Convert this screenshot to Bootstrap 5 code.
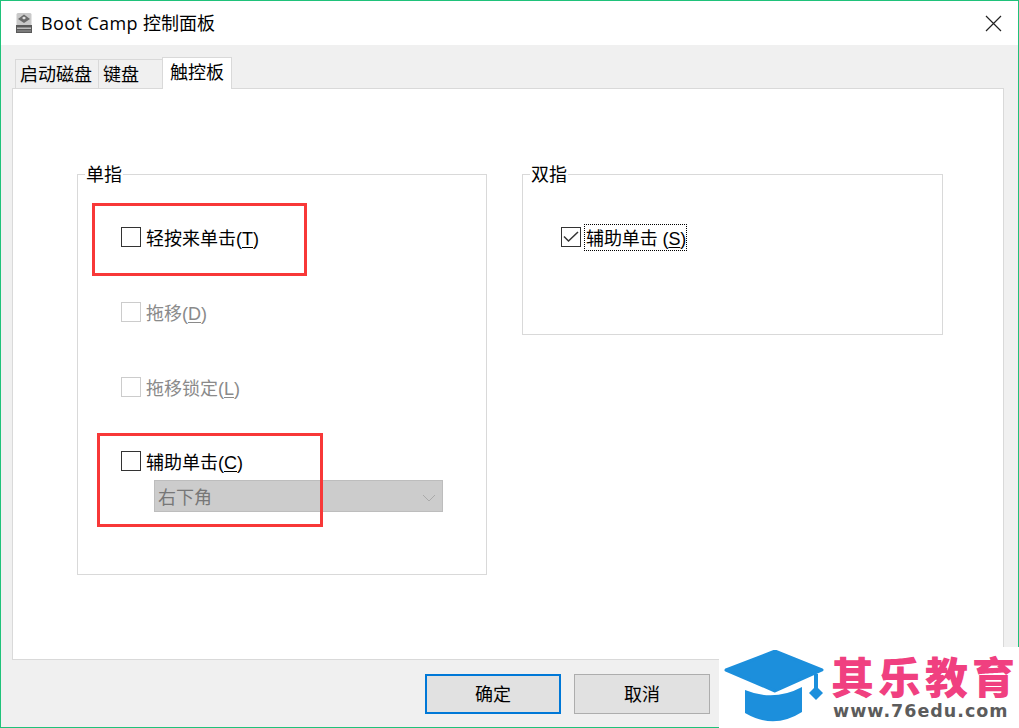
<!DOCTYPE html>
<html lang="zh-CN">
<head>
<meta charset="utf-8">
<title>Boot Camp</title>
<link href="https://cdn.jsdelivr.net/npm/bootstrap@5.3.0/dist/css/bootstrap.min.css" rel="stylesheet">
<style>
html,body{margin:0;height:728px;overflow:hidden;background:#fff}
body{font-family:"Liberation Sans","Noto Sans CJK SC",sans-serif;font-size:18px;color:#000;line-height:1}
.win{width:1019px;height:728px;border:1px solid #1fc27a;background:#f0f0f0;position:relative;display:flex;flex-direction:column}
.tbar{height:44px;background:#fff;padding-left:14px;gap:8px;font-size:18px;flex:none}
.tlat{font-family:"Open Sans",sans-serif;letter-spacing:.4px}
.tclose{margin-left:auto;margin-right:16px;width:17px;height:17px}
.tabrow{height:43px;padding-left:14px;align-items:flex-end;flex:none}
.tb{height:29px;border:1px solid #d9d9d9;border-bottom:0;background:#f0f0f0;padding:6px 0 0 4px;font-size:18px;margin-right:-1px}
.tb1{width:84px}.tb2{width:65px}
.tb3{width:70px;height:32px;background:#fff;padding:6px 0 0 7px;margin-bottom:-1px;position:relative;z-index:2}
.pane{margin:0 14px 0 11px;height:572px;background:#fff;border:1px solid #d9d9d9;padding:85px 0 0 64px;gap:35px;flex:none}
.grp{border:1px solid #d9d9d9;position:relative}
.grp1{width:410px;height:401px;padding:52px 0 0 43px}
.grp2{width:421px;height:161px;padding:52px 0 0 38px}
.cap{position:absolute;top:-9px;left:7px;background:#fff;padding:0 1px;font-size:18px;line-height:18px}
.chk{height:20px;gap:5px;font-size:18px;line-height:20px}
.lbl{padding-top:4px}
.bx{width:20px;height:20px;border:1px solid #333;background:#fff;flex:none;display:block}
.off .bx{border-color:#ccc}
.off{color:#8a8a8a}
.mt1{margin-top:55px}
.mt2{margin-top:54px}
.u{text-decoration:underline;text-underline-offset:2px}
.fcs{outline:1px dotted #000;padding:5px 0 2px 1px;margin-left:-1px;line-height:18px;letter-spacing:-.1px}
.sel{margin:9px 0 0 33px;width:289px;height:32px;background:#ccc;border:1px solid #bdbdbd;color:#777;font-size:18px;padding:3px 6px 0 3px;justify-content:space-between}
.foot{flex:1;justify-content:flex-end;padding:14px 308px 0 0;gap:13px;align-items:flex-start}
.wb{width:136px;height:40px;background:#e1e1e1;border:1px solid #adadad;font-size:18px;padding:2px 0 0;color:#000;border-radius:0}
.wb.pri{border:2px solid #0078d7}
.mk{position:absolute;border:3px solid #f83838;background:transparent}
.mk1{left:91px;top:202px;width:215px;height:73px}
.mk2{left:96px;top:432px;width:226px;height:94px}
.logo{position:absolute;left:718px;top:646px;width:300px;height:81px;background:#fff;padding:3px 0 0 5px;gap:7px}
.logo svg{flex:none}
.ltxt{padding-top:3px}
.lname{font-family:"Noto Sans CJK SC",sans-serif;font-weight:900;font-size:43px;line-height:44px;letter-spacing:4px;color:#f04080;white-space:nowrap}
.lurl{font-family:"DejaVu Sans",sans-serif;font-weight:700;font-size:17.5px;line-height:18px;letter-spacing:1px;color:#5c5c5c;white-space:nowrap;margin-top:5px;padding-left:2px}
</style>
</head>
<body>
<div class="win">
  <div class="tbar d-flex align-items-center">
    <svg width="18" height="22" viewBox="0 0 18 22"><rect x="1.500" y="1" width="15" height="13" rx="1.500" fill="#c9c9c9"/><path d="M9 2.500 15 7 9 11 3 7z" fill="#6a6a6a"/><path d="M7 6l2-1.500L11 6 9 7.500z" fill="#e4e4e4"/><rect x="1" y="13" width="16" height="8" fill="#5a5a5a"/><rect x="2" y="15.500" width="14" height="1.500" fill="#bdbdbd"/><rect x="2" y="18.500" width="14" height="1" fill="#9a9a9a"/></svg>
    <span><span class="tlat">Boot Camp</span> 控制面板</span>
    <svg class="tclose" viewBox="0 0 17 17"><path d="M1 1 16 16M16 1 1 16" stroke="#222" stroke-width="1.2" fill="none"/></svg>
  </div>
  <div class="tabrow d-flex">
    <div class="tb tb1">启动磁盘</div>
    <div class="tb tb2">键盘</div>
    <div class="tb tb3">触控板</div>
  </div>
  <div class="pane d-flex">
    <div class="grp grp1">
      <span class="cap">单指</span>
      <div class="chk d-flex align-items-center"><span class="bx"></span><span class="lbl">轻按来单击(<span class="u">T</span>)</span></div>
      <div class="chk off d-flex align-items-center mt1"><span class="bx"></span><span class="lbl">拖移(<span class="u">D</span>)</span></div>
      <div class="chk off d-flex align-items-center mt1"><span class="bx"></span><span class="lbl">拖移锁定(<span class="u">L</span>)</span></div>
      <div class="chk d-flex align-items-center mt2"><span class="bx"></span><span class="lbl">辅助单击(<span class="u">C</span>)</span></div>
      <div class="sel d-flex align-items-center"><span>右下角</span><svg width="14" height="8" viewBox="0 0 14 8"><path d="M1 1l6 6 6-6" stroke="#aaa" fill="none"/></svg></div>
    </div>
    <div class="grp grp2">
      <span class="cap">双指</span>
      <div class="chk d-flex align-items-center"><svg class="bx" viewBox="0 0 18 18"><path d="M2 8.500l4.500 4.500L16 4" stroke="#333" stroke-width="1.500" fill="none"/></svg><span class="fcs">辅助单击 (<span class="u">S</span>)</span></div>
    </div>
  </div>
  <div class="foot d-flex">
    <button class="btn wb pri" type="button">确定</button>
    <button class="btn wb" type="button">取消</button>
  </div>
  <div class="mk mk1"></div>
  <div class="mk mk2"></div>
  <div class="logo d-flex">
    <svg width="100" height="78" viewBox="0 0 100 78"><path d="M51 1 98 20 51 41 2 20z" fill="#1c8fdc" stroke="#1c8fdc" stroke-width="3" stroke-linejoin="round"/><path d="M21 40Q50 52 78 37V62Q50 80 21 63z" fill="#1c8fdc"/><path d="M90 24h4V40h-4z" fill="#1c8fdc"/><path d="M92 36l7 7-7 7-7-7z" fill="#1c8fdc"/></svg>
    <div class="ltxt d-flex flex-column">
      <div class="lname">其乐教育</div>
      <div class="lurl">www.76edu.com</div>
    </div>
  </div>
</div>
</body>
</html>
